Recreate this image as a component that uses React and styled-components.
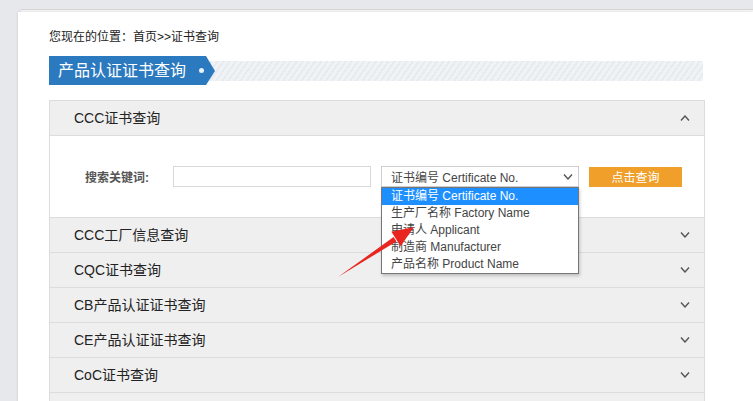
import React from 'react'
import styled, { createGlobalStyle } from 'styled-components'

const GlobalStyle = createGlobalStyle`
  html, body {
    margin: 0;
    padding: 0;
    background: #e6e8eb;
    font-family: "Liberation Sans", "Noto Sans CJK SC", sans-serif;
    color: #333;
  }
  #root { position: relative; }
`

const Frame = styled.div`
  padding-top: 9px;
  padding-left: 18px;
  height: 392px;
  overflow: hidden;
`

const TopEdge = styled.div`
  margin-left: 3px;
  height: 2px;
  background: #f7f7f7;
  border-top: 1px solid #d6d6d6;
`

const Panel = styled.div`
  background: #fff;
  box-shadow: 0 0 3px rgba(0, 0, 0, 0.12);
  padding: 15px 0 0 31px;
  height: 400px;
`

const Crumb = styled.div`
  font-size: 12px;
  line-height: 20px;
  color: #222;
`

const TitleRow = styled.div`
  display: flex;
  align-items: center;
  margin-top: 9px;
  width: 654px;
`

const TitleTag = styled.div`
  width: 166px;
  height: 29px;
  background: #2b79bf;
  clip-path: polygon(0 0, 157px 0, 166px 15px, 157px 29px, 0 29px);
  color: #fff;
  font-size: 16px;
  line-height: 29px;
  padding-left: 9px;
  box-sizing: border-box;
  display: flex;
  align-items: center;
`

const Dot = styled.span`
  width: 5px;
  height: 5px;
  border-radius: 50%;
  background: #e8f0f8;
  margin-left: 13px;
`

const Stripes = styled.div`
  flex: 1;
  height: 20px;
  margin-left: -9px;
  background: repeating-linear-gradient(
    -55deg,
    #f0f3f6 0px,
    #f0f3f6 3px,
    #e7ebf0 3px,
    #e7ebf0 5px
  );
`

const Accordion = styled.div`
  margin-top: 15px;
  width: 654px;
  border-left: 1px solid #dcdcdc;
  border-right: 1px solid #dcdcdc;
  border-top: 1px solid #dcdcdc;
`

const Head = styled.div`
  display: flex;
  align-items: center;
  justify-content: space-between;
  height: 34px;
  background: #efefef;
  border-bottom: 1px solid #dcdcdc;
  padding: 0 14px 0 24px;
  font-size: 14px;
  line-height: 18px;
  color: #222;
`

const Body = styled.div`
  display: flex;
  align-items: center;
  height: 82px;
  padding-left: 35px;
  background: #fff;
  border-bottom: 1px solid #dcdcdc;
  box-sizing: border-box;
`

const Label = styled.label`
  width: 88px;
  font-size: 12px;
  font-weight: bold;
  color: #555;
`

const TextInput = styled.input`
  width: 198px;
  height: 21px;
  box-sizing: border-box;
  border: 1px solid #d9d9d9;
  outline: none;
  margin-right: 10px;
`

const SelectWrap = styled.div`
  position: relative;
  width: 198px;
  margin-right: 10px;
`

const SelectBox = styled.div`
  height: 21px;
  box-sizing: border-box;
  border: 1px solid #cfcfcf;
  display: flex;
  align-items: center;
  justify-content: space-between;
  padding: 0 5px 0 9px;
  font-size: 12px;
  color: #444;
`

const OptionList = styled.div`
  position: absolute;
  top: 100%;
  left: 0;
  width: 198px;
  box-sizing: border-box;
  border: 1px solid #767676;
  background: #fff;
  box-shadow: 1px 2px 3px rgba(0, 0, 0, 0.2);
  z-index: 2;
`

const Option = styled.div`
  height: 17px;
  line-height: 17px;
  padding-left: 9px;
  font-size: 12px;
  color: ${p => (p.$active ? '#fff' : '#444')};
  background: ${p => (p.$active ? '#1e8fff' : '#fff')};
`

const SearchButton = styled.button`
  width: 93px;
  height: 20px;
  border: none;
  background: #f0a02a;
  color: #fff;
  font-family: inherit;
  font-size: 12px;
  padding: 0;
  cursor: pointer;
`

const Arrow = styled.svg`
  position: absolute;
  left: 0;
  top: 0;
  pointer-events: none;
  z-index: 3;
`

const Chevron = ({ up }) => (
  <svg width="10" height="6" viewBox="0 0 10 6">
    <polyline
      points={up ? '1,5.5 5,1 9,5.5' : '1,0.5 5,5 9,0.5'}
      fill="none"
      stroke="#555"
      strokeWidth="1.4"
    />
  </svg>
)

const options = [
  '证书编号 Certificate No.',
  '生产厂名称 Factory Name',
  '申请人 Applicant',
  '制造商 Manufacturer',
  '产品名称 Product Name',
]

const rows = ['CCC工厂信息查询', 'CQC证书查询', 'CB产品认证证书查询', 'CE产品认证证书查询', 'CoC证书查询', '']

export default function App() {
  return (
    <>
      <GlobalStyle />
      <Frame>
        <TopEdge />
        <Panel>
          <Crumb>您现在的位置：首页&gt;&gt;证书查询</Crumb>
          <TitleRow>
            <TitleTag>
              产品认证证书查询
              <Dot />
            </TitleTag>
            <Stripes />
          </TitleRow>
          <Accordion>
            <Head>
              CCC证书查询
              <Chevron up />
            </Head>
            <Body>
              <Label>搜索关键词:</Label>
              <TextInput />
              <SelectWrap>
                <SelectBox>
                  {options[0]}
                  <Chevron />
                </SelectBox>
                <OptionList>
                  {options.map((o, i) => (
                    <Option key={o} $active={i === 0}>{o}</Option>
                  ))}
                </OptionList>
              </SelectWrap>
              <SearchButton>点击查询</SearchButton>
            </Body>
            {rows.map((r, i) => (
              <Head key={i}>
                {r}
                <Chevron />
              </Head>
            ))}
          </Accordion>
        </Panel>
      </Frame>
      <Arrow width="753" height="401" viewBox="0 0 753 401">
        <polygon points="338,277 396.4,241.4 393.6,237.1" fill="#e8251f" />
        <polygon points="414,227 400.6,246.2 391.4,231.8" fill="#e8251f" />
      </Arrow>
    </>
  )
}
